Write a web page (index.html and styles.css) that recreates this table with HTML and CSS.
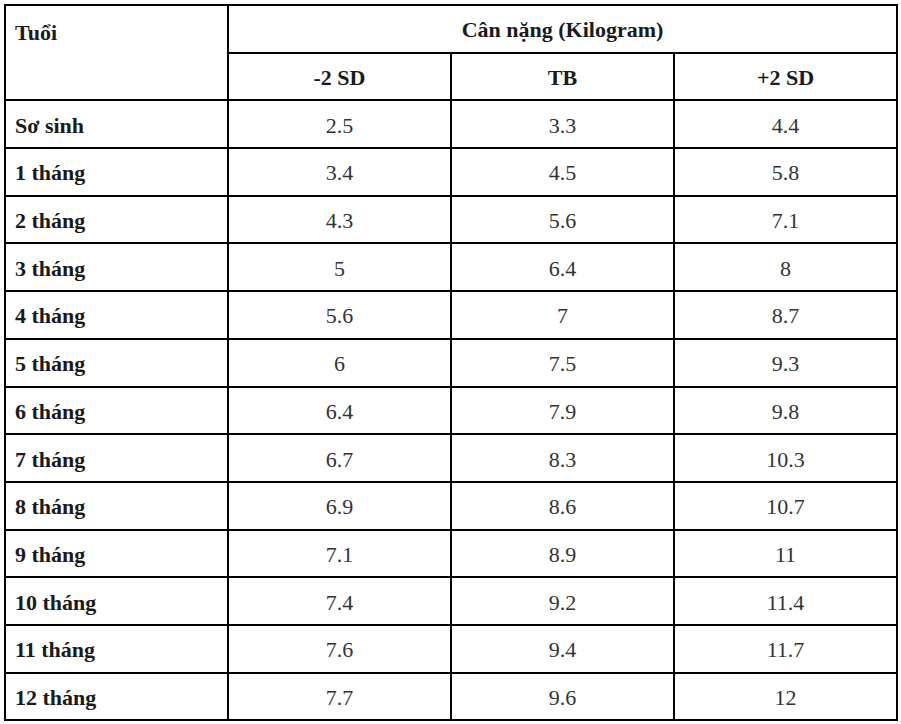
FILE: index.html
```html
<!DOCTYPE html>
<html lang="vi">
<head>
<meta charset="utf-8">
<title>Cân nặng</title>
<link rel="stylesheet" href="styles.css">
</head>
<body>
<table class="weight">
  <colgroup><col class="c"><col class="c"><col class="c"><col class="c"></colgroup>
  <tr>
    <th class="label top" rowspan="2">Tuổi</th>
    <th colspan="3">Cân nặng (Kilogram)</th>
  </tr>
  <tr><th>-2 SD</th><th>TB</th><th>+2 SD</th></tr>
  <tr><th class="label">Sơ sinh</th><td>2.5</td><td>3.3</td><td>4.4</td></tr>
  <tr><th class="label">1 tháng</th><td>3.4</td><td>4.5</td><td>5.8</td></tr>
  <tr><th class="label">2 tháng</th><td>4.3</td><td>5.6</td><td>7.1</td></tr>
  <tr><th class="label">3 tháng</th><td>5</td><td>6.4</td><td>8</td></tr>
  <tr><th class="label">4 tháng</th><td>5.6</td><td>7</td><td>8.7</td></tr>
  <tr><th class="label">5 tháng</th><td>6</td><td>7.5</td><td>9.3</td></tr>
  <tr><th class="label">6 tháng</th><td>6.4</td><td>7.9</td><td>9.8</td></tr>
  <tr><th class="label">7 tháng</th><td>6.7</td><td>8.3</td><td>10.3</td></tr>
  <tr><th class="label">8 tháng</th><td>6.9</td><td>8.6</td><td>10.7</td></tr>
  <tr><th class="label">9 tháng</th><td>7.1</td><td>8.9</td><td>11</td></tr>
  <tr><th class="label">10 tháng</th><td>7.4</td><td>9.2</td><td>11.4</td></tr>
  <tr><th class="label">11 tháng</th><td>7.6</td><td>9.4</td><td>11.7</td></tr>
  <tr><th class="label">12 tháng</th><td>7.7</td><td>9.6</td><td>12</td></tr>
</table>
</body>
</html>
```
FILE: styles.css
```css
html, body {
  margin: 0;
  padding: 0;
  background: #fff;
}
body {
  padding: 4px 0 0 4px;
  font-family: "Liberation Serif", "Times New Roman", serif;
  font-size: 22px;
  color: #333;
}
.weight {
  border-collapse: collapse;
  width: 894px;
  table-layout: fixed;
  font-family: "Liberation Serif", "Times New Roman", serif;
}
.weight .c {
  width: 25%;
}
.weight tr {
  height: 47.7px;
}
.weight th,
.weight td {
  border: 2px solid #000;
  padding: 3px 9px 0;
  text-align: center;
  vertical-align: middle;
  line-height: 24px;
}
.weight th {
  font-weight: bold;
  color: #1a1a1a;
}
.weight td {
  font-weight: normal;
  color: #333;
}
.weight th.label {
  text-align: left;
}
.weight th.top {
  vertical-align: top;
  padding-top: 15px;
}
```
